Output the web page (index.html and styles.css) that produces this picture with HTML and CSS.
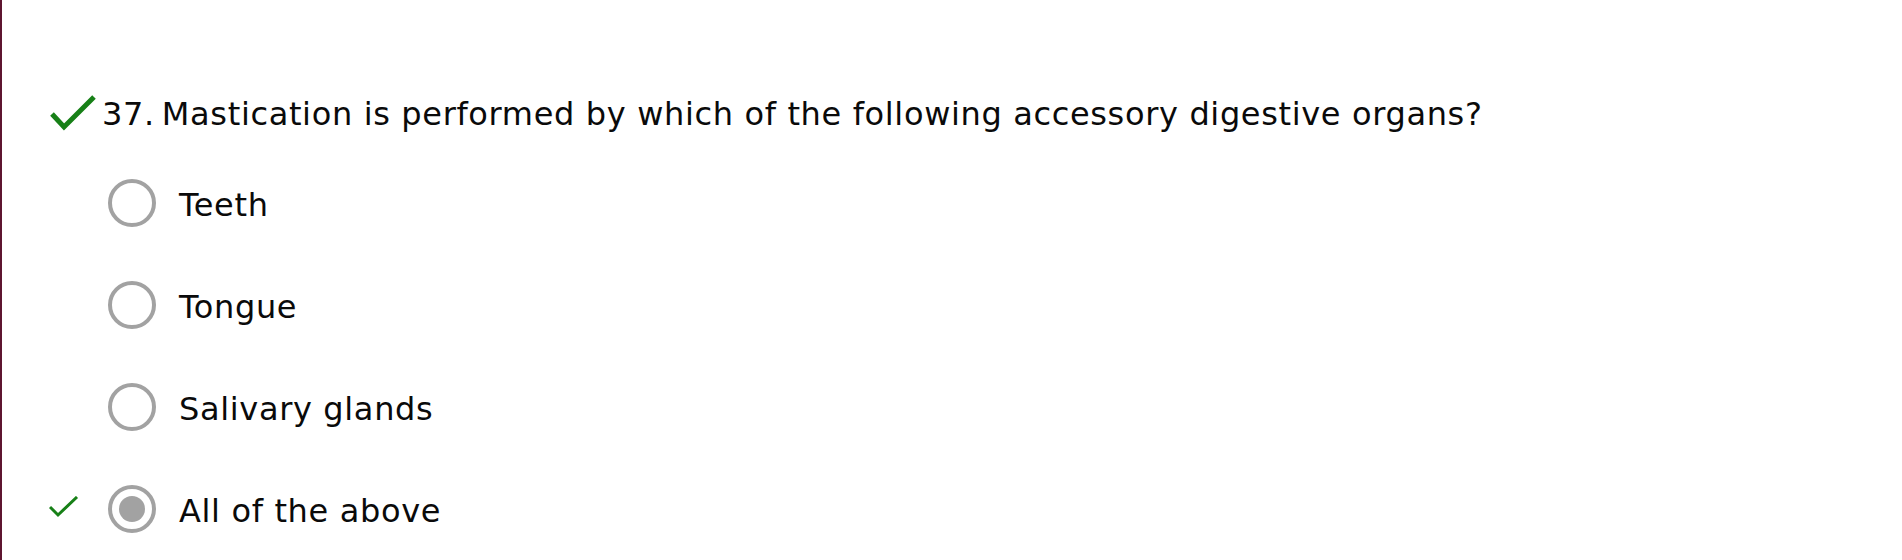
FILE: index.html
```html
<!DOCTYPE html>
<html lang="en">
<head>
<meta charset="utf-8">
<title>Question 37</title>
<link rel="stylesheet" href="styles.css">
</head>
<body>
<div class="page">
  <section class="question">
    <div class="q-head">
      <span class="q-mark">
        <svg width="46" height="36" viewBox="0 0 46 36"><polyline points="2,19 14,32 44,2" fill="none" stroke="#178017" stroke-width="5"/></svg>
      </span>
      <span class="q-num">37.</span>
      <span class="q-text">Mastication is performed by which of the following accessory digestive organs?</span>
    </div>
    <ul class="options">
      <li class="option">
        <span class="o-mark"></span>
        <span class="radio"></span>
        <span class="label">Teeth</span>
      </li>
      <li class="option">
        <span class="o-mark"></span>
        <span class="radio"></span>
        <span class="label">Tongue</span>
      </li>
      <li class="option">
        <span class="o-mark"></span>
        <span class="radio"></span>
        <span class="label">Salivary glands</span>
      </li>
      <li class="option">
        <span class="o-mark">
          <svg width="30" height="22" viewBox="0 0 30 22"><polyline points="1,11 9,19 28,1" fill="none" stroke="#178017" stroke-width="3"/></svg>
        </span>
        <span class="radio checked"></span>
        <span class="label">All of the above</span>
      </li>
    </ul>
  </section>
</div>
</body>
</html>
```
FILE: styles.css
```css
html, body {
  margin: 0;
  padding: 0;
  background: #fff;
}
body {
  font-family: "DejaVu Sans", Verdana, sans-serif;
  color: #0a0a0a;
  letter-spacing: 0.65px;
}
.page {
  min-height: 560px;
  border-left: 2px solid #5e1530;
  box-sizing: border-box;
  padding-top: 94px;
}
.q-head {
  display: flex;
  align-items: center;
  font-size: 32px;
  line-height: 40px;
  height: 40px;
}
.q-mark {
  display: flex;
  width: 52px;
  padding-left: 48px;
  margin-top: -2px;
}
.q-num {
  margin-right: 7px;
}
.options {
  list-style: none;
  margin: 0;
  padding: 18px 0 0 0;
}
.option {
  display: flex;
  align-items: center;
  height: 102px;
  font-size: 32px;
  line-height: 40px;
}
.o-mark {
  width: 59px;
  padding-left: 47px;
  display: flex;
  align-items: center;
  margin-top: -4px;
}
.radio {
  width: 48px;
  height: 48px;
  box-sizing: border-box;
  border: 4px solid #a2a2a2;
  border-radius: 50%;
  margin-right: 23px;
  display: flex;
  align-items: center;
  justify-content: center;
}
.radio.checked::after {
  content: "";
  width: 26px;
  height: 26px;
  border-radius: 50%;
  background: #a2a2a2;
}
.label {
  padding-top: 4px;
}
```
